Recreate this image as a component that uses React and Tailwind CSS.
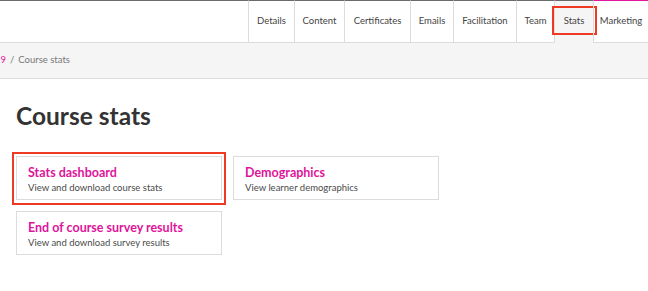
import React from "react";

const tabs = [
  { label: "Details", w: "w-[46px]" },
  { label: "Content", w: "w-[50px]" },
  { label: "Certificates", w: "w-[66px]" },
  { label: "Emails", w: "w-[43px]" },
  { label: "Facilitation", w: "w-[63px]" },
  { label: "Team", w: "w-[38px]" },
  { label: "Stats", w: "w-[39px]", active: true },
  { label: "Marketing", w: "w-[55px]", pink: true },
];

function Card({ title, text, highlight }) {
  return (
    <div className="relative h-[44px] border border-[#dcdcdc] bg-white pl-[11px] pt-[8px]">
      {highlight && (
        <div className="absolute -left-[5px] -right-[5px] -top-[5px] -bottom-[6px] border-2 border-[#ee3a24]" />
      )}
      <div className="text-[12.5px] font-bold leading-[16px] text-[#e0149c]">{title}</div>
      <div className="text-[9.5px] leading-[14px] text-[#4a4a4a]">{text}</div>
    </div>
  );
}

export default function App() {
  return (
    <div className="w-[648px] h-[291px] overflow-hidden bg-white font-['Lato',sans-serif]">
      <div className="flex h-[43px]">
        <div className="flex-1 border-t border-b border-t-[#6a6a6a] border-b-[#dcdcdc]" />
        {tabs.map((t) => (
          <div
            key={t.label}
            className={
              "relative flex shrink-0 items-center justify-center border-l border-l-[#dcdcdc] text-[9.5px] text-[#444] " +
              t.w +
              (t.active
                ? " border-t border-t-[#6a6a6a] bg-[#f5f5f5] border-b border-b-[#f5f5f5]"
                : t.pink
                ? " border-t border-t-[#e4149e] border-b border-b-[#dcdcdc]"
                : " border-t border-t-[#6a6a6a] border-b border-b-[#dcdcdc]")
            }
          >
            {t.label}
            {t.active && (
              <div className="absolute -left-[3px] -right-[4px] top-[5px] h-[29px] border-2 border-[#ee3a24]" />
            )}
          </div>
        ))}
      </div>
      <div className="flex h-[36px] items-center border-b border-[#dcdcdc] bg-[#f5f5f5] text-[9.5px] text-[#777]">
        <span className="-ml-[5px] text-[#e0149c]">19</span>
        <span className="ml-[4px]">/</span>
        <span className="ml-[4px]">Course stats</span>
      </div>
      <div className="px-[16px]">
        <h1 className="mt-[23px] text-[24.5px] font-bold leading-[28px] text-[#333]">Course stats</h1>
        <div className="mt-[26px] grid grid-cols-[206px_206px] gap-x-[11px] gap-y-[11px]">
          <Card title="Stats dashboard" text="View and download course stats" highlight />
          <Card title="Demographics" text="View learner demographics" />
          <Card title="End of course survey results" text="View and download survey results" />
        </div>
      </div>
    </div>
  );
}
